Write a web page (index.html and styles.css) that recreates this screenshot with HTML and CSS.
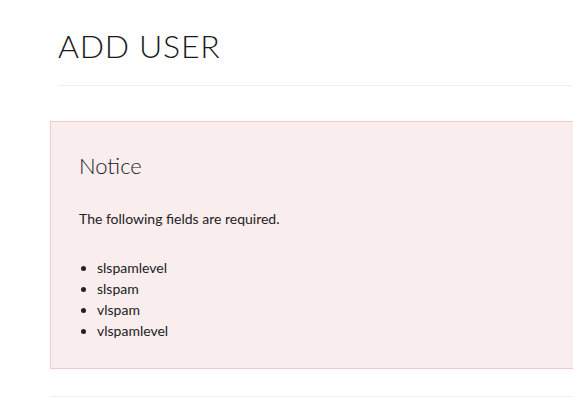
FILE: index.html
```html
<!DOCTYPE html>
<html>
<head>
<meta charset="utf-8">
<link rel="stylesheet" href="styles.css">
</head>
<body>
<div class="page">
  <header class="page-header">
    <h1 class="title">ADD USER</h1>
  </header>
  <div class="alert">
    <h2 class="alert-title">Notice</h2>
    <p class="alert-text">The following fields are required.</p>
    <ul class="alert-list">
      <li>slspamlevel</li>
      <li>slspam</li>
      <li>vlspam</li>
      <li>vlspamlevel</li>
    </ul>
  </div>
  <div class="footer-rule"></div>
</div>
</body>
</html>
```
FILE: styles.css
```css
html, body {
  margin: 0;
  padding: 0;
  background: #ffffff;
}
body {
  font-family: "Lato", "Noto Sans", sans-serif;
  color: #222222;
  overflow: hidden;
}
.page {
  margin-left: 50px;
  width: 523px;
  padding-top: 24px;
  overflow: hidden;
}
.page-header {
  margin-left: 8px;
  border-bottom: 1px solid #eeeeee;
  height: 61px;
}
.title {
  margin: 0;
  font-size: 32px;
  font-weight: 300;
  letter-spacing: 0.7px;
  line-height: 44px;
  color: #1a1a1a;
}
.alert {
  margin-top: 35px;
  width: 560px;
  height: 246px;
  background: #f9eded;
  border: 1px solid #f4c8c8;
  padding: 0 28px;
  box-sizing: content-box;
}
.alert-title {
  margin: 30px 0 0;
  font-size: 22px;
  font-weight: 300;
  line-height: 28px;
  color: #1a1a2a;
}
.alert-text {
  margin: 30px 0 0;
  font-size: 14px;
  line-height: 18px;
}
.alert-list {
  margin: 29px 0 0;
  padding-left: 18px;
  font-size: 14px;
  line-height: 21px;
}
.footer-rule {
  margin-top: 27px;
  border-top: 1px solid #eeeeee;
}
```
